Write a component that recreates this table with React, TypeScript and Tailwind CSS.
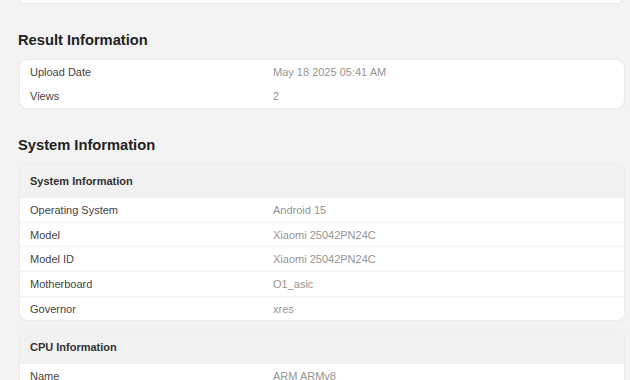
import React from "react";

type Row = { label: string; value: string };

const resultRows: Row[] = [
  { label: "Upload Date", value: "May 18 2025 05:41 AM" },
  { label: "Views", value: "2" },
];

const systemRows: Row[] = [
  { label: "Operating System", value: "Android 15" },
  { label: "Model", value: "Xiaomi 25042PN24C" },
  { label: "Model ID", value: "Xiaomi 25042PN24C" },
  { label: "Motherboard", value: "O1_asic" },
  { label: "Governor", value: "xres" },
];

const cpuRows: Row[] = [{ label: "Name", value: "ARM ARMv8" }];

function InfoRow({ row, divider }: { row: Row; divider: boolean }) {
  return (
    <div className={`flex items-center px-[10px] ${divider ? "border-t border-[#f0f0f0] h-[24.7px]" : "h-[24px]"}`}>
      <div className="w-[243px] shrink-0 text-[#444]">{row.label}</div>
      <div className="text-[#959595]">{row.value}</div>
    </div>
  );
}

function Card({ title, rows, className = "" }: { title?: string; rows: Row[]; className?: string }) {
  return (
    <div className={`ml-[2px] bg-white rounded-lg shadow-[0_0_0_1px_#ebebeb,0_1px_2px_rgba(0,0,0,0.05)] overflow-hidden ${className}`}>
      {title && (
        <div className="h-[33px] pt-px flex items-center px-[10px] bg-[#f1f1f1] font-bold text-[#333]">
          {title}
        </div>
      )}
      {rows.map((r) => (
        <InfoRow key={r.label} row={r} divider={!!title} />
      ))}
    </div>
  );
}

export default function App() {
  return (
    <div
      className="w-[630px] h-[380px] overflow-hidden bg-[#f3f3f3] pl-[18px] pr-[6px] text-[11px] leading-[14px]"
      style={{ fontFamily: '"Liberation Sans", Arial, sans-serif' }}
    >
      {/* previous card, cut off at the top */}
      <div className="ml-[2px] mr-[3px] h-[3px] bg-white rounded-b-lg shadow-[0_0_0_1px_#e6e6e6]" />

      <h2 className="mt-[27px] text-[14.7px] leading-[20px] font-bold text-[#222]">Result Information</h2>
      <Card rows={resultRows} className="mt-[10px]" />

      <h2 className="mt-[27px] text-[14.7px] leading-[20px] font-bold text-[#222]">System Information</h2>
      <Card title="System Information" rows={systemRows} className="mt-[9px]" />
      <Card title="CPU Information" rows={cpuRows} className="mt-[10px]" />
    </div>
  );
}
